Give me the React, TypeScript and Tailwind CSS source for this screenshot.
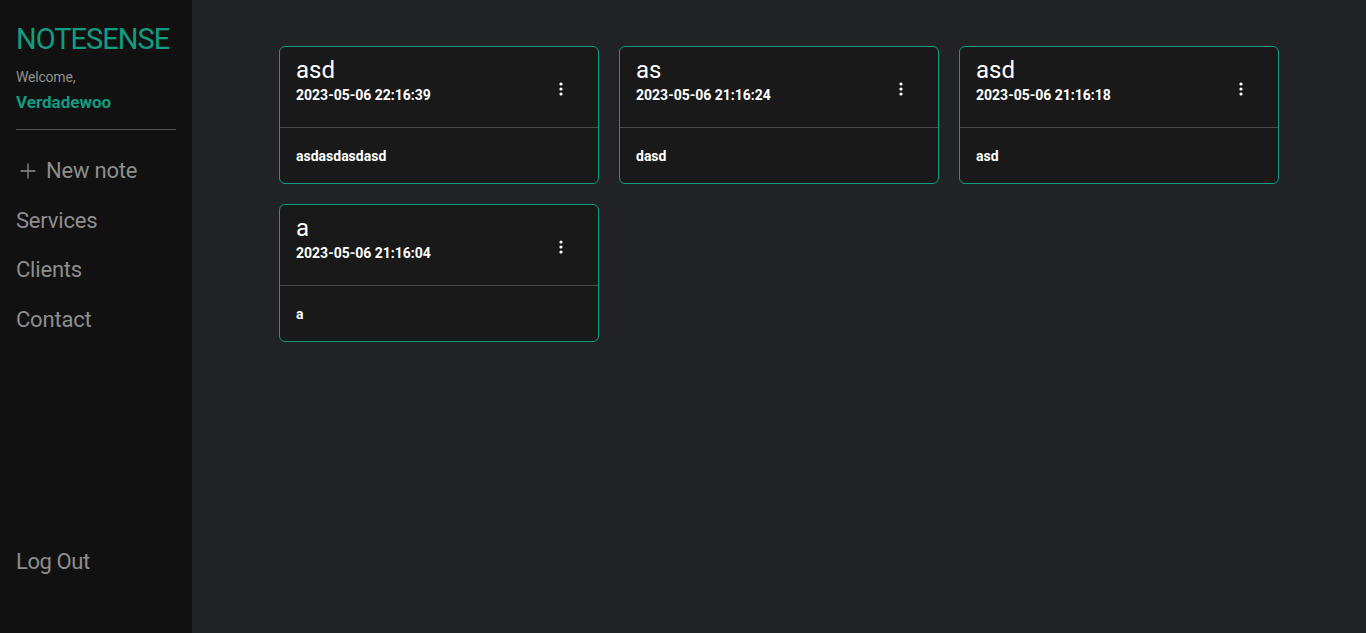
import { Plus } from "lucide-react";

const notes = [
  { title: "asd", date: "2023-05-06 22:16:39", body: "asdasdasdasd" },
  { title: "as", date: "2023-05-06 21:16:24", body: "dasd" },
  { title: "asd", date: "2023-05-06 21:16:18", body: "asd" },
  { title: "a", date: "2023-05-06 21:16:04", body: "a" },
];

const font = { fontFamily: "Roboto, 'Noto Sans', sans-serif" };

function Dots() {
  return (
    <svg width="4" height="14" viewBox="0 0 4 14" className="fill-white">
      <circle cx="2" cy="2" r="1.6" />
      <circle cx="2" cy="7" r="1.6" />
      <circle cx="2" cy="12" r="1.6" />
    </svg>
  );
}

function NoteCard({ note }: { note: (typeof notes)[number] }) {
  return (
    <div className="flex h-[138px] flex-col rounded-md border border-[#139c80] bg-[#19191a] text-white">
      <div className="flex h-[81px] items-start justify-between border-b border-[#4a4a4a] px-4 pt-[9px]">
        <div className="flex flex-col">
          <span className="text-[24px] leading-[28px]">{note.title}</span>
          <span className="mt-[2px] text-[14px] font-bold leading-[18px]">{note.date}</span>
        </div>
        <div className="mr-[19px] mt-[26px]">
          <Dots />
        </div>
      </div>
      <div className="flex flex-1 items-center px-4 pt-[1px] text-[14px] font-bold">
        {note.body}
      </div>
    </div>
  );
}

export default function App() {
  return (
    <div className="flex h-[633px] w-full bg-[#212226]" style={font}>
      <aside className="flex w-[192px] shrink-0 flex-col bg-[#111111] px-4">
        <div className="pt-[21px] text-[29px] leading-[36px] tracking-[-1px] text-[#129c80]">
          NOTESENSE
        </div>
        <div className="mt-[11px] text-[14px] leading-[18px] tracking-[-0.2px] text-[#8f8f8f]">
          Welcome,
        </div>
        <div className="mt-[5px] text-[17px] font-bold leading-[22px] text-[#129c80]">
          Verdadewoo
        </div>
        <div className="mt-[16px] h-px w-[160px] bg-[#555555]" />
        <nav className="mt-[26px] flex flex-col gap-[20.5px] text-[22px] leading-[29px] tracking-[-0.2px] text-[#8e8e8e]">
          <div className="flex items-center gap-[6px]">
            <Plus size={24} strokeWidth={1.3} />
            <span>New note</span>
          </div>
          <div>Services</div>
          <div>Clients</div>
          <div>Contact</div>
        </nav>
        <div className="mt-auto pb-[57px] text-[22px] leading-[29px] tracking-[-0.4px] text-[#8e8e8e]">
          Log Out
        </div>
      </aside>
      <main className="flex flex-1 justify-center pt-[46px]">
        <div className="grid h-fit w-[1000px] grid-cols-3 gap-5">
          {notes.map((n, i) => (
            <NoteCard key={i} note={n} />
          ))}
        </div>
      </main>
    </div>
  );
}
